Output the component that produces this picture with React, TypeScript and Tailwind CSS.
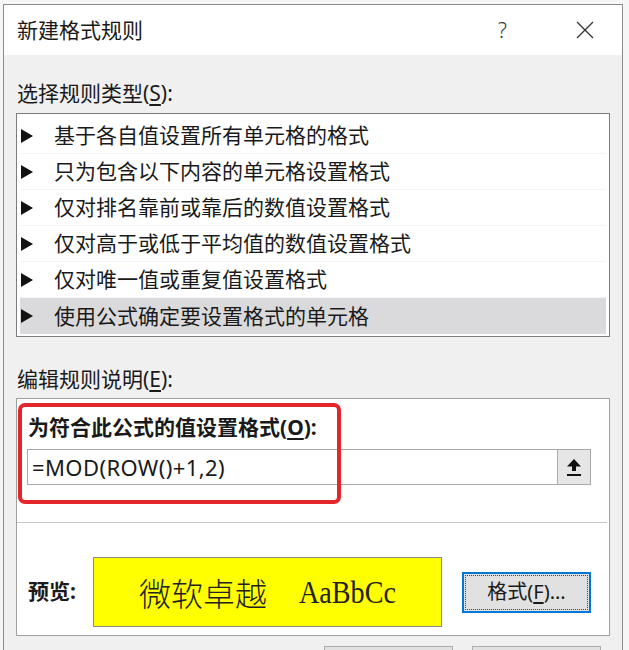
const ui = "font-['Noto_Sans','Noto_Sans_CJK_SC',sans-serif]";

const rules = [
  "基于各自值设置所有单元格的格式",
  "只为包含以下内容的单元格设置格式",
  "仅对排名靠前或靠后的数值设置格式",
  "仅对高于或低于平均值的数值设置格式",
  "仅对唯一值或重复值设置格式",
  "使用公式确定要设置格式的单元格",
];

function Triangle() {
  return (
    <svg width="12" height="14" viewBox="0 0 12 14" className="shrink-0">
      <polygon points="0,0 12,7 0,14" fill="#111" />
    </svg>
  );
}

function CloseIcon() {
  return (
    <svg width="18" height="18" viewBox="0 0 18 18">
      <line x1="1" y1="1" x2="17" y2="17" stroke="#333" strokeWidth="1.3" />
      <line x1="17" y1="1" x2="1" y2="17" stroke="#333" strokeWidth="1.3" />
    </svg>
  );
}

function CollapseIcon() {
  return (
    <svg width="16" height="19" viewBox="0 0 16 19">
      {/* arrow */}
      <path d="M8 1 L15 8.5 L10 8.5 L10 13 L6 13 L6 8.5 L1 8.5 Z" fill="#111" />
      {/* underline bar */}
      <rect x="1" y="16" width="14" height="2" fill="#111" />
    </svg>
  );
}

export default function App() {
  return (
    <div className={`w-[629px] h-[650px] overflow-hidden bg-[#f6f6f6] pt-[4px] pl-[3px] text-[#1a1a1a] ${ui}`}>
      <div className="relative w-[620px] h-[700px] border border-[#8c8c8c] bg-[#f0f0f0]">
        {/* Title bar */}
        <div className="h-[50px] bg-white flex items-center pl-[13px]">
          <span className="text-[21px] leading-none">新建格式规则</span>
          <span className="ml-auto text-[21px] font-light leading-none text-[#333] mr-[69px]">?</span>
          <span className="mr-[28px] flex items-center">
            <CloseIcon />
          </span>
        </div>

        <div className="px-[12px]">
          {/* Rule type */}
          <div className="mt-[24px] h-[28px] leading-[28px] text-[21px] pl-[1px]">
            选择规则类型(<span className="underline underline-offset-[3px]">S</span>):
          </div>
          <div className="mt-[6px] border border-[#7e7e7e] bg-white px-[3px] pt-[4px] pb-[2px]">
            {rules.map((r, i) => (
              <div
                key={r}
                className={`h-[36px] flex items-center pl-[1px] text-[21px] ${
                  i === rules.length - 1 ? "bg-[#dadadc]" : "border-b border-[#f4f4f4]"
                }`}
              >
                <Triangle />
                <span className="ml-[21px] leading-none">{r}</span>
              </div>
            ))}
          </div>

          {/* Rule description */}
          <div className="mt-[28px] h-[28px] leading-[28px] text-[21px] pl-[1px]">
            编辑规则说明(<span className="underline underline-offset-[3px]">E</span>):
          </div>
          <div className="mt-[5px] h-[238px] border border-[#a0a0a0] bg-white">
            <div className="pt-[14px] pl-[11px] h-[42px] leading-[28px] text-[21px] font-bold">
              为符合此公式的值设置格式(<span className="underline underline-offset-[3px]">O</span>):
            </div>
            <div className="mt-[8px] ml-[10px] w-[564px] h-[36px] border border-[#a8a8a8] flex items-stretch">
              <div className="flex-1 flex items-center pl-[4px] text-[22px] tracking-[0.4px]">=MOD(ROW()+1,2)</div>
              <div className="w-[33px] bg-[#e6e6e6] border-l border-[#adadad] flex items-center justify-center">
                <CollapseIcon />
              </div>
            </div>
            <div className="mt-[37px] mr-[2px] h-px bg-[#c8c8cc]" />

            {/* Preview */}
            <div className="mt-[34px] flex items-center pl-[11px]">
              <span className="w-[65px] text-[21px] font-bold">预览:</span>
              <div className="w-[349px] h-[70px] border border-[#8a8a8a] bg-[#ffff00] flex items-center pl-[45px] gap-[32px] text-[#222]">
                <span className="text-[32px] font-light font-['Noto_Sans_CJK_SC',serif] leading-none">微软卓越</span>
                <span className="inline-block origin-left text-[32px] scale-x-[0.88] font-['Liberation_Serif',serif] leading-none">AaBbCc</span>
              </div>
              <button className="ml-[20px] w-[129px] h-[41px] border-2 border-[#0078d7] bg-[#e1e1e1] p-[1px]">
                <div className="w-full h-full border border-dotted border-[#444] flex items-center justify-center text-[20px] leading-none">
                  格式(<span className="underline underline-offset-[3px]">F</span>)...
                </div>
              </button>
            </div>
          </div>

          {/* Bottom buttons (cut off) */}
          <div className="mt-[10px] flex justify-end gap-[19px] mr-[9px]">
            <div className="w-[129px] h-[34px] border border-[#adadad] bg-[#e1e1e1]" />
            <div className="w-[129px] h-[34px] border border-[#adadad] bg-[#e1e1e1]" />
          </div>
        </div>

        {/* Red annotation frame */}
        <div className="absolute left-[14px] top-[398px] w-[323px] h-[101px] border-[4px] border-[#e3262a] rounded-[7px]" />
      </div>
    </div>
  );
}
